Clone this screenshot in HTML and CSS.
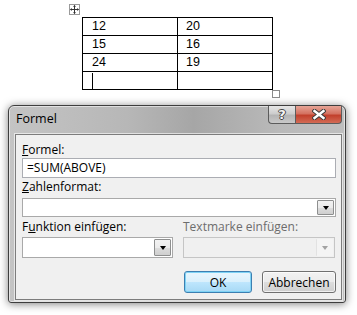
FILE: index.html
```html
<!DOCTYPE html>
<html lang="de">
<head>
  <meta charset="UTF-8" />
  <meta name="viewport" content="width=device-width, initial-scale=1.0"/>
  <title>Formel</title>
  <link rel="stylesheet" href="styles.css">
</head>
<body>
  <div class="doc">
    <div class="move-handle">
      <svg width="9" height="9" viewBox="0 0 9 9">
        <path d="M4.5 0.5 L4.5 8.5 M0.5 4.5 L8.5 4.5" stroke="#333" stroke-width="1" fill="none"/>
        <path d="M4.5 0 L3 1.8 L6 1.8 Z M4.5 9 L3 7.2 L6 7.2 Z M0 4.5 L1.8 3 L1.8 6 Z M9 4.5 L7.2 3 L7.2 6 Z" fill="#333"/>
      </svg>
    </div>
    <table class="word-table">
      <tr><td>12</td><td>20</td></tr>
      <tr><td>15</td><td>16</td></tr>
      <tr><td>24</td><td>19</td></tr>
      <tr><td><span class="caret"></span></td><td></td></tr>
    </table>
    <div class="resize-handle"></div>
  </div>

  <div class="window">
    <div class="titlebar">
      <span class="title">Formel</span>
      <div class="caption-buttons">
        <div class="cap-btn help">?</div>
        <div class="cap-btn close">
          <svg width="14" height="11" viewBox="0 0 14 11">
            <path d="M2.5 2 L11.5 9 M11.5 2 L2.5 9" stroke="#3a3a3a" stroke-width="4.4" stroke-linecap="square" fill="none"/>
            <path d="M2.5 2 L11.5 9 M11.5 2 L2.5 9" stroke="#fff" stroke-width="2.4" stroke-linecap="square" fill="none"/>
          </svg>
        </div>
      </div>
    </div>

    <div class="client">
      <div class="field-label"><u>F</u>ormel:</div>
      <div class="textbox">=SUM(ABOVE)</div>

      <div class="field-label second"><u>Z</u>ahlenformat:</div>
      <div class="combo">
        <span class="combo-btn"><span class="arrow"></span></span>
      </div>

      <div class="split">
        <div>
          <div class="field-label">F<u>u</u>nktion einfügen:</div>
          <div class="combo tall">
            <span class="combo-btn"><span class="arrow"></span></span>
          </div>
        </div>
        <div class="disabled">
          <div class="field-label">Textmarke einfügen:</div>
          <div class="combo tall">
            <span class="combo-btn"><span class="arrow"></span></span>
          </div>
        </div>
      </div>

      <div class="buttons">
        <button class="btn default">OK</button>
        <button class="btn">Abbrechen</button>
      </div>
    </div>
  </div>
</body>
</html>
```

FILE: styles.css
```css
body {
  margin: 0;
  width: 357px;
  height: 315px;
  overflow: hidden;
  background: #fff;
  font-family: "Open Sans", "Liberation Sans", sans-serif;
  font-size: 12px;
  color: #000;
}

/* document part */
.doc {
  display: flex;
  flex-direction: column;
  align-items: flex-start;
}

.move-handle {
  margin: 4px 0 0 69px;
  width: 11px;
  height: 11px;
  box-sizing: border-box;
  border: 1px solid #9a9a9a;
  display: flex;
  align-items: center;
  justify-content: center;
  background: #fff;
}

.word-table {
  margin: 2px 0 0 82px;
  border-collapse: collapse;
  font-family: "Liberation Sans", sans-serif;
  font-size: 12.5px;
}

.word-table td {
  border: 1px solid #000;
  height: 18px;
  padding: 0 0 0 9px;
  box-sizing: border-box;
  vertical-align: middle;
  line-height: 17px;
}

.word-table tr:nth-child(even) td {
  height: 17px;
}

.word-table td:first-child {
  width: 95px;
}

.word-table td:last-child {
  width: 95px;
  padding-left: 8px;
}

.caret {
  display: block;
  width: 1px;
  height: 16px;
  background: #000;
  margin-top: 1px;
}

.resize-handle {
  margin-left: 272px;
  width: 8px;
  height: 8px;
  box-sizing: border-box;
  border: 1px solid #8a8a8a;
  background: #fff;
}

/* dialog window */
.window {
  margin: 7px 0 0 8px;
  width: 338px;
  height: 198px;
  box-sizing: border-box;
  border: 1px solid #3e3e3e;
  border-radius: 6px 6px 3px 3px;
  background: linear-gradient(90deg, #c4c4c4 0%, #b7b7b7 35%, #a6a6a6 55%, #b9b9b9 80%, #bfbfbf 100%);
  box-shadow: 0 1px 9px rgba(0, 0, 0, 0.5), inset 0 0 0 1px rgba(255, 255, 255, 0.55);
  display: flex;
  flex-direction: column;
}

.titlebar {
  height: 28px;
  display: flex;
  align-items: flex-start;
  justify-content: space-between;
  padding-left: 7px;
}

.title {
  margin-top: 5px;
  font-size: 12.5px;
  line-height: 16px;
}

.caption-buttons {
  display: flex;
  margin-right: 3px;
}

.cap-btn {
  height: 18px;
  box-sizing: border-box;
  border: 1px solid #5c5c5c;
  border-top: none;
  display: flex;
  align-items: center;
  justify-content: center;
}

.help {
  width: 27px;
  border-right: none;
  border-radius: 0 0 0 4px;
  background: linear-gradient(#e6e6e6, #cdcdcd 45%, #b4b4b4 55%, #c9c9c9);
  color: #f4f4f4;
  font-weight: bold;
  font-size: 13px;
  font-family: "DejaVu Sans", sans-serif;
  text-shadow: 1px 0 #444, -1px 0 #444, 0 1px #444, 0 -1px #444;
}

.close {
  width: 47px;
  border-radius: 0 0 4px 0;
  background: linear-gradient(#e6a597, #d47261 45%, #c2402c 55%, #d36b55);
}

.client {
  flex: 1;
  margin: 0 3px 2px 6px;
  border: 1px solid #7c7c7c;
  box-shadow: 0 0 0 1px rgba(255, 255, 255, 0.6);
  background: #f0f0f0;
  padding: 7px 5px 0 6px;
}

.field-label {
  height: 16px;
  line-height: 16px;
  white-space: nowrap;
}

.field-label.second {
  margin-top: 1px;
}

.textbox {
  height: 20px;
  box-sizing: border-box;
  border: 1px solid #abadb3;
  background: #fff;
  padding-left: 4px;
  line-height: 18px;
}

.combo {
  margin-top: 3px;
  height: 19px;
  box-sizing: border-box;
  border: 1px solid #a9a9a9;
  background: #fff;
  display: flex;
  justify-content: flex-end;
  padding: 1px;
}

.field-label + .combo {
  margin-bottom: 2px;
}

.combo.tall {
  margin-top: 2px;
  height: 21px;
}

.combo-btn {
  width: 17px;
  box-sizing: border-box;
  border: 1px solid #8e8f8f;
  border-radius: 1px;
  background: linear-gradient(#f2f2f2, #ebebeb 50%, #dddddd 51%, #cfcfcf);
  display: flex;
  align-items: center;
  justify-content: center;
}

.arrow {
  width: 0;
  height: 0;
  border-left: 3.5px solid transparent;
  border-right: 3.5px solid transparent;
  border-top: 4px solid #000;
}

.split {
  display: grid;
  grid-template-columns: 151px 152px;
  gap: 10px;
}

.disabled .field-label {
  color: #6d6d6d;
}

.disabled .combo {
  border-color: #c5c5c5;
  background: #f0f0f0;
}

.disabled .combo-btn {
  border: none;
  border-left: 1px solid #e2e2e2;
  background: #f4f4f4;
}

.disabled .arrow {
  border-top-color: #a2a2a2;
}

.buttons {
  margin-top: 11px;
  display: flex;
  justify-content: flex-end;
  gap: 10px;
}

.btn {
  height: 22px;
  font-family: inherit;
  font-size: 12px;
  color: #000;
  border: 1px solid #707070;
  border-radius: 3px;
  background: linear-gradient(#f2f2f2, #ebebeb 50%, #dddddd 51%, #cfcfcf);
  box-shadow: inset 0 0 0 1px rgba(255, 255, 255, 0.7);
  padding: 0;
  width: 74px;
}

.btn.default {
  width: 68px;
  border-color: #3c7fb1;
  background: linear-gradient(#eaf6fd, #d9f0fc 50%, #bee6fd 51%, #a7d9f5);
  box-shadow: inset 0 0 0 1px #7fd3f5;
}
```
